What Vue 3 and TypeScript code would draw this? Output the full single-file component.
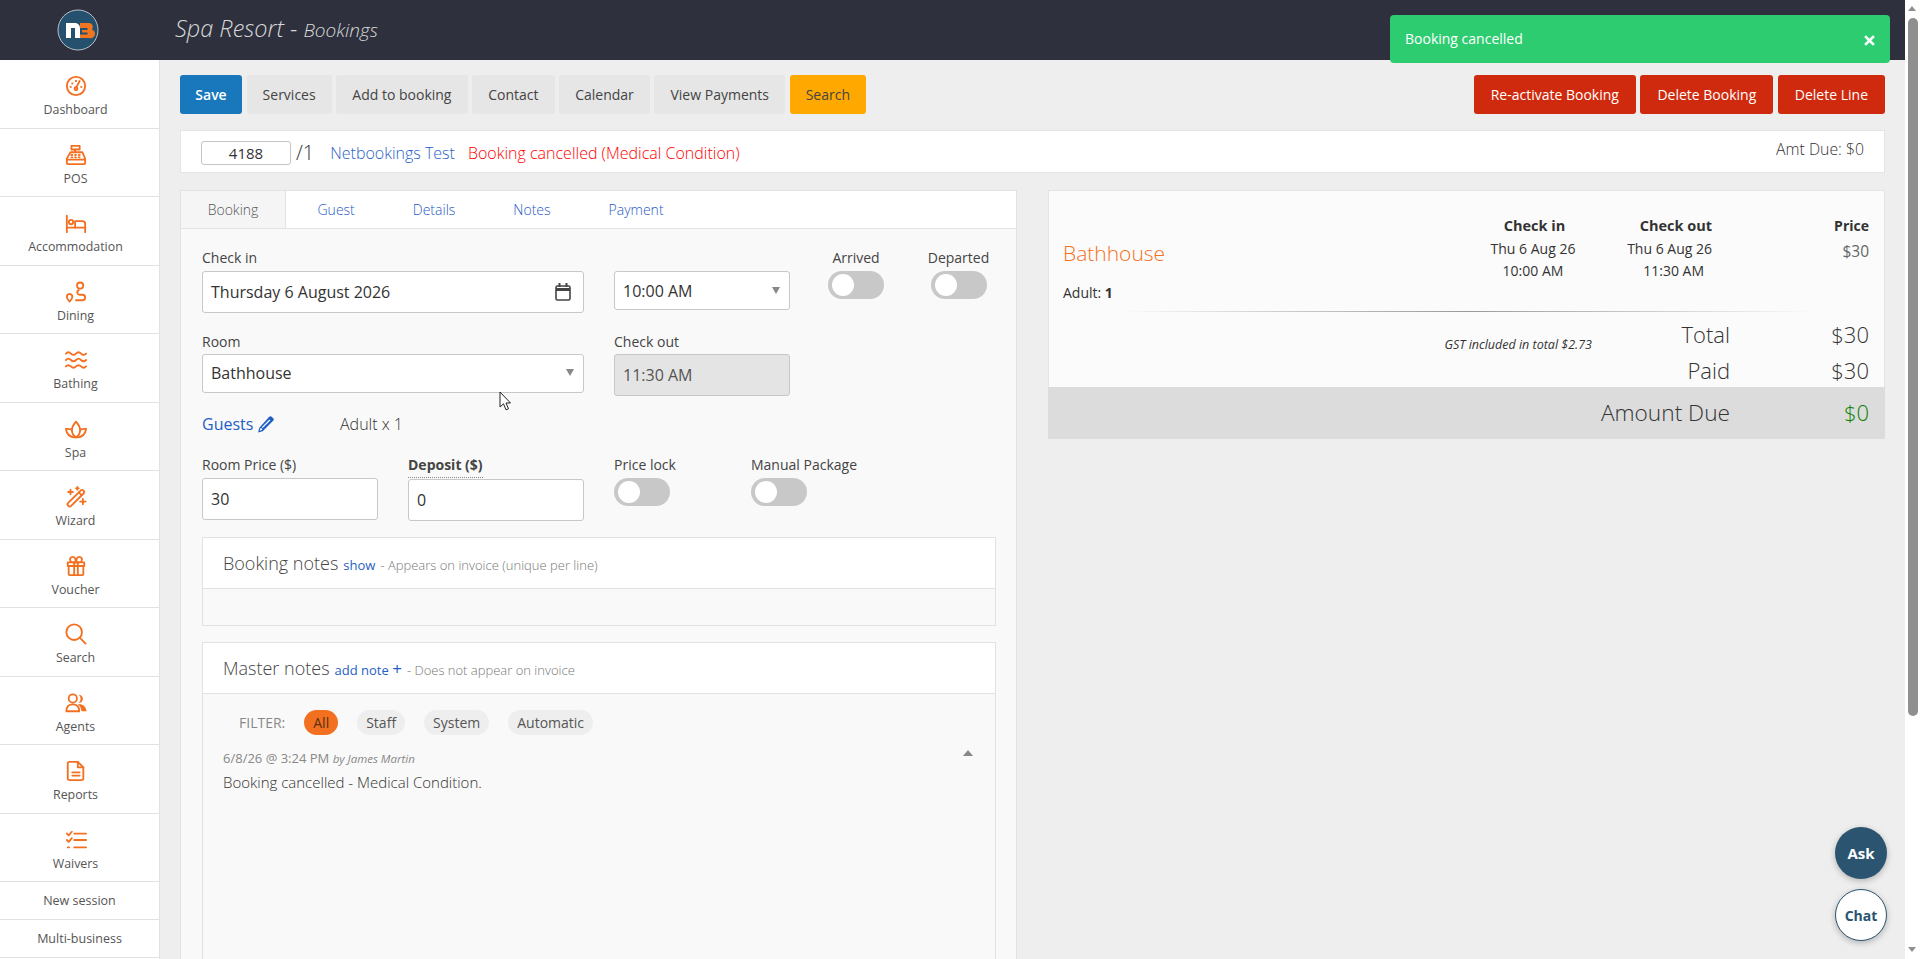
<script setup lang="ts">
interface NavItem {
  label: string
  paths: string[]
  filled?: string[]
  circles?: number[][]
}

const nav: NavItem[] = [
  {
    label: 'Dashboard',
    paths: ['M12 14l4-7.5'],
    filled: ['M7 8.2h2v2H7z', 'M11 5.5h2v2h-2z', 'M5.2 12h2v2h-2z', 'M16.8 12h2v2h-2z'],
    circles: [[12, 12, 10], [12, 15, 1.6]],
  },
  {
    label: 'POS',
    paths: ['M7 2h9v4H7z', 'M11 6v3', 'M6 9h13l3 7v5a1 1 0 0 1-1 1H3a1 1 0 0 1-1-1v-5z', 'M2 17h20', 'M7 12h1M11 12h1M15 12h1M7 14.5h1M11 14.5h1M15 14.5h1'],
  },
  {
    label: 'Accommodation',
    paths: ['M2 4v18', 'M2 17h20', 'M22 22v-9a3 3 0 0 0-3-3h-8v7'],
    circles: [[6.6, 11, 2.4]],
  },
  {
    label: 'Dining',
    paths: ['M5 14a3.4 3.4 0 0 0-3 3.5c0 2 3 5 3 5s3-3 3-5A3.4 3.4 0 0 0 5 14z', 'M12 21h7a3 3 0 0 0 0-6h-3a2.6 2.6 0 0 1-1-5'],
    circles: [[16.5, 5, 3.4]],
  },
  {
    label: 'Bathing',
    paths: [
      'M1 5c2-2 3.500-2 5.500 0s3.500 2 5.500 0 3.500-2 5.500 0 3.500 2 5.500 0',
      'M1 12c2-2 3.500-2 5.500 0s3.500 2 5.500 0 3.500-2 5.500 0 3.500 2 5.500 0',
      'M1 19c2-2 3.500-2 5.500 0s3.500 2 5.500 0 3.500-2 5.500 0 3.500 2 5.500 0',
    ],
  },
  {
    label: 'Spa',
    paths: [
      'M12 21c-3-2-4.500-5-4.500-8 0-3 2-6 4.500-9 2.500 3 4.500 6 4.500 9 0 3-1.500 6-4.500 8z',
      'M12 21c-6 .5-10-3-11-9 2.500-.5 4.500 0 6.500 1',
      'M12 21c6 .5 10-3 11-9-2.500-.5-4.500 0-6.500 1',
    ],
  },
  {
    label: 'Wizard',
    paths: [
      'M3.500 18.500L17 5a2.200 2.200 0 0 1 3.200 3.200L6.700 21.700a2.200 2.200 0 0 1-3.200-3.200z',
      'M15 7l3 3',
      'M6 4v5M3.500 6.500h5',
      'M13.500 1v3M12 2.500h3',
      'M19.500 14v6M16.500 17h6',
    ],
  },
  {
    label: 'Voucher',
    paths: [
      'M3 8h18v4H3z',
      'M4 12h16v9a1 1 0 0 1-1 1H5a1 1 0 0 1-1-1z',
      'M10 8v14M14 8v14',
      'M12 8H8.500a3 3 0 1 1 2.500-4.600z',
      'M12 8h3.500a3 3 0 1 0-2.500-4.600z',
    ],
  },
  {
    label: 'Search',
    paths: ['M16 16l6.500 6.500'],
    circles: [[10, 10, 8.500]],
  },
  {
    label: 'Agents',
    paths: ['M1.500 21c0-5 3-7.500 7-7.500s7 2.500 7 7.500z'],
    filled: ['M15 3a4.500 4.500 0 0 1 0 9 6 6 0 0 0 0-9z', 'M14 13.500c5-1 9 2 9.500 7.500H18c0-3-1.500-5.500-4-7.500z'],
    circles: [[8.500, 7, 4.500]],
  },
  {
    label: 'Reports',
    paths: ['M5 2h9l6 6v12a2 2 0 0 1-2 2H5a2 2 0 0 1-2-2V4a2 2 0 0 1 2-2z', 'M14 2v6h6', 'M8 13.500h8M8 17h8'],
  },
  {
    label: 'Waivers',
    paths: ['M2 5l2 2 3.500-4', 'M2 12l2 2 3.500-4', 'M3 20h1.500', 'M10 5h13M10 12h13M10 20h13'],
  },
]

const toolbar = ['Services', 'Add to booking', 'Contact', 'Calendar', 'View Payments']
const dangerButtons = ['Re-activate Booking', 'Delete Booking', 'Delete Line']
const tabs = ['Guest', 'Details', 'Notes', 'Payment']
const filters = ['Staff', 'System', 'Automatic']
</script>

<template>
  <div class="page">
    <div class="main">
      <header class="topbar">
        <div class="logo-cell">
          <svg class="logo" viewBox="0 0 42 42" width="42" height="42">
            <circle cx="21" cy="21" r="20" fill="#25506e" stroke="#b9c0c6" stroke-width="1" />
            <path d="M9 29V14h9a5 5 0 0 1 5 5v10h-5V19h-4v10z" fill="#fff" />
            <path d="M23 14h9a4 4 0 0 1 3 6.500 4.500 4.500 0 0 1-3 8.500h-9v-3.500h7.500v-2H25v-2.500h5.500v-2H23z" fill="#f07622" />
          </svg>
        </div>
        <div class="title">Spa Resort - <span class="title-sub">Bookings</span></div>
      </header>

      <div class="layout">
        <nav class="sidebar">
          <a v-for="item in nav" :key="item.label" class="nav-item">
            <svg viewBox="0 0 24 24" width="22" height="22" fill="none" stroke="#f37021" stroke-width="2" stroke-linecap="round" stroke-linejoin="round">
              <circle v-for="(c, i) in item.circles" :key="i" :cx="c[0]" :cy="c[1]" :r="c[2]" />
              <path v-for="(d, i) in item.paths" :key="i" :d="d" />
              <path v-for="(d, i) in item.filled" :key="i" :d="d" fill="#f37021" stroke="none" />
            </svg>
            <span>{{ item.label }}</span>
          </a>
          <a class="nav-text">New session</a>
          <a class="nav-text">Multi-business</a>
        </nav>

        <main class="content">
          <div class="toolbar">
            <div class="btn-group">
              <button class="btn btn-primary">Save</button>
              <button v-for="b in toolbar" :key="b" class="btn">{{ b }}</button>
              <button class="btn btn-amber">Search</button>
            </div>
            <div class="btn-group">
              <button v-for="b in dangerButtons" :key="b" class="btn btn-danger">{{ b }}</button>
            </div>
          </div>

          <div class="info-bar">
            <span class="ref-box">4188</span>
            <span class="ref-line">/1</span>
            <a class="guest-link">Netbookings Test</a>
            <span class="cancel-note">Booking cancelled (Medical Condition)</span>
            <span class="amt-due">Amt Due: $0</span>
          </div>

          <div class="columns">
            <section class="card">
              <div class="tabs">
                <span class="tab tab-active">Booking</span>
                <a v-for="t in tabs" :key="t" class="tab">{{ t }}</a>
              </div>

              <div class="form">
                <div class="row row-one">
                  <div class="field wide">
                    <label>Check in</label>
                    <div class="input tall">
                      Thursday 6 August 2026
                      <svg viewBox="0 0 16 18" width="16" height="18" fill="none" stroke="#444" stroke-width="1.600">
                        <rect x="1" y="3" width="14" height="14" rx="1.500" />
                        <path d="M1 6.500h14" stroke-width="3" />
                        <path d="M4.500 0v4M11.500 0v4" stroke-width="2" />
                      </svg>
                    </div>
                  </div>
                  <div class="field narrow">
                    <label>&nbsp;</label>
                    <div class="input">10:00 AM<i class="caret"></i></div>
                  </div>
                  <div class="switch-field arrived">
                    <label>Arrived</label>
                    <span class="switch"></span>
                  </div>
                  <div class="switch-field departed">
                    <label>Departed</label>
                    <span class="switch"></span>
                  </div>
                </div>

                <div class="row row-two">
                  <div class="field wide">
                    <label>Room</label>
                    <div class="input">Bathhouse<i class="caret"></i></div>
                  </div>
                  <div class="field narrow">
                    <label>Check out</label>
                    <div class="input tall disabled">11:30 AM</div>
                  </div>
                </div>

                <div class="guests-row">
                  <a class="guests-link">
                    Guests
                    <svg viewBox="0 0 16 16" width="17" height="17" fill="#1f5fc4">
                      <path d="M11.500.8a1.600 1.600 0 0 1 2.300 0l1.400 1.400a1.600 1.600 0 0 1 0 2.300L5.400 14.300 1 15.500l1.200-4.400zM3.300 11.300l-.7 2.500 2.100-.6.200-1.400z" />
                      <path d="M4.500 10.600l7.200-7.200.8.800-7.200 7.200z" fill="#fff" />
                    </svg>
                  </a>
                  <span class="guests-count">Adult x 1</span>
                </div>

                <div class="row row-price">
                  <div class="field half">
                    <label>Room Price ($)</label>
                    <div class="input tall">30</div>
                  </div>
                  <div class="field half deposit">
                    <label class="strong"><span>Deposit ($)</span></label>
                    <div class="input tall">0</div>
                  </div>
                  <div class="switch-field price-lock">
                    <label>Price lock</label>
                    <span class="switch"></span>
                  </div>
                  <div class="switch-field manual">
                    <label>Manual Package</label>
                    <span class="switch"></span>
                  </div>
                </div>

                <div class="panel booking-notes">
                  <div class="panel-head">
                    <span class="panel-title">Booking notes</span>
                    <a class="panel-link">show</a>
                    <span class="panel-hint">- Appears on invoice (unique per line)</span>
                  </div>
                  <div class="panel-empty"></div>
                </div>

                <div class="panel master-notes">
                  <div class="panel-head">
                    <span class="panel-title">Master notes</span>
                    <a class="panel-link">add note <b class="plus">+</b></a>
                    <span class="panel-hint">- Does not appear on invoice</span>
                  </div>
                  <div class="notes-body">
                    <div class="filter-row">
                      <span class="filter-label">FILTER:</span>
                      <span class="pill pill-on">All</span>
                      <span v-for="f in filters" :key="f" class="pill">{{ f }}</span>
                    </div>
                    <div class="note-meta">
                      <span>6/8/26 @ 3:24 PM <em>by James Martin</em></span>
                      <i class="caret-up"></i>
                    </div>
                    <p class="note-text">Booking cancelled - Medical Condition.</p>
                  </div>
                </div>
              </div>
            </section>

            <section class="summary">
              <div class="summary-line">
                <div class="room-col">
                  <div class="room-name">Bathhouse</div>
                  <div class="room-guests">Adult: <b>1</b></div>
                </div>
                <div class="date-col">
                  <b>Check in</b>
                  <span>Thu 6 Aug 26</span>
                  <span>10:00 AM</span>
                </div>
                <div class="date-col out">
                  <b>Check out</b>
                  <span>Thu 6 Aug 26</span>
                  <span class="out-time">11:30 AM</span>
                </div>
                <div class="price-col">
                  <b>Price</b>
                  <span>$30</span>
                </div>
              </div>
              <div class="fade-rule"></div>
              <div class="total-row">
                <span class="gst">GST included in total $2.73</span>
                <span>Total</span>
                <span>$30</span>
              </div>
              <div class="total-row paid">
                <span></span>
                <span>Paid</span>
                <span>$30</span>
              </div>
              <div class="total-row due">
                <span></span>
                <span>Amount Due</span>
                <span class="due-value">$0</span>
              </div>
            </section>
          </div>
        </main>
      </div>
    </div>

    <div class="scrollbar">
      <i class="arrow-up"></i>
      <div class="thumb"></div>
      <i class="arrow-down"></i>
    </div>

    <div class="toast">
      <span>Booking cancelled</span>
      <svg viewBox="0 0 10 10" width="11" height="11" stroke="#fff" stroke-width="2.400">
        <path d="M1 1l8 8M9 1l-8 8" />
      </svg>
    </div>

    <button class="fab fab-ask">Ask</button>
    <button class="fab fab-chat">Chat</button>

    <svg class="cursor" viewBox="0 0 13 20" width="13" height="20">
      <path d="M1 1v15l3.500-3.200 2.500 6 2.500-1-2.500-5.800H11.500z" fill="#fff" stroke="#222" stroke-width="1" stroke-linejoin="round" />
    </svg>
  </div>
</template>

<style>
html,
body {
  margin: 0;
  overflow: hidden;
}
</style>

<style scoped>
.page {
  position: relative;
  display: flex;
  height: 959px;
  overflow: hidden;
  font-family: "Open Sans", "Liberation Sans", sans-serif;
  font-size: 14px;
  color: #333;
  background: #eee;
}

.main {
  flex: 1;
  min-width: 0;
  display: flex;
  flex-direction: column;
}

.topbar {
  flex: none;
  height: 60px;
  display: flex;
  align-items: center;
  background: #2e303d;
}

.logo-cell {
  width: 175px;
  padding-left: 57px;
  box-sizing: border-box;
  display: flex;
}

.title {
  font-size: 23.500px;
  font-style: italic;
  font-weight: 300;
  color: #d8d8d8;
  margin-top: -5px;
}

.title-sub {
  font-size: 19px;
}

.layout {
  flex: 1;
  min-height: 0;
  display: flex;
}

.sidebar {
  flex: none;
  width: 160px;
  box-sizing: border-box;
  background: #fff;
  border-right: 1px solid #e2e2e2;
  overflow: hidden;
}

.nav-item {
  height: 68.500px;
  box-sizing: border-box;
  padding: 15px 8px 0 0;
  display: flex;
  flex-direction: column;
  align-items: center;
  gap: 3px;
  border-bottom: 1px solid #e4e1e4;
  font-size: 12.400px;
  line-height: 20px;
  color: #555;
}

.nav-text {
  display: block;
  height: 38px;
  box-sizing: border-box;
  border-bottom: 1px solid #e4e1e4;
  font-size: 12.500px;
  line-height: 37px;
  text-align: center;
  color: #555;
}

.content {
  flex: 1;
  min-width: 0;
  padding: 15px 20px 0;
}

.toolbar {
  display: flex;
  justify-content: space-between;
  margin-bottom: 16px;
}

.btn-group {
  display: flex;
  gap: 4.500px;
}

.btn {
  height: 39px;
  padding: 0 16.100px;
  border: 0;
  border-radius: 3px;
  background: #e6e6e6;
  color: #444;
  font: inherit;
  cursor: pointer;
}

.btn-primary {
  width: 62px;
  padding: 0;
  background: #1878bb;
  color: #fff;
  font-weight: 600;
}

.btn-amber {
  background: #ffa900;
}

.btn-danger {
  padding: 0 17px;
  background: #d02a0e;
  color: #fff;
}

.info-bar {
  height: 43px;
  box-sizing: border-box;
  display: flex;
  align-items: center;
  padding: 2px 20px 0;
  background: #fff;
  border: 1px solid #e4e4e4;
  margin-bottom: 17px;
  font-weight: 300;
}

.ref-box {
  width: 90px;
  height: 24px;
  box-sizing: border-box;
  border: 1px solid #c4c4c4;
  border-radius: 3px;
  text-align: center;
  line-height: 22px;
  font-size: 15px;
  font-weight: 400;
}

.ref-line {
  margin-left: 5px;
  font-size: 20px;
}

.guest-link {
  margin-left: 16px;
  font-size: 16px;
  color: #2a62c9;
}

.cancel-note {
  margin-left: 13px;
  font-size: 16px;
  color: #f00;
}

.amt-due {
  margin-left: auto;
  margin-top: -8px;
  margin-right: 0;
  font-size: 15.800px;
}

.columns {
  display: grid;
  grid-template-columns: 837px 837px;
  column-gap: 31px;
  align-items: start;
}

.card {
  height: 900px;
  background: #f9f9f9;
  border: 1px solid #e2e2e2;
  box-sizing: border-box;
}

.tabs {
  display: flex;
  height: 38px;
  box-sizing: border-box;
  background: #fff;
  border-bottom: 1px solid #e4e4e4;
}

.tab {
  padding: 0 29px;
  line-height: 37px;
  color: #1f5ac4;
  font-weight: 300;
}

.tab-active {
  width: 105px;
  padding: 0;
  margin-right: 2.500px;
  text-align: center;
  background: #f5f5f5;
  border-right: 1px solid #e4e4e4;
  color: #555;
  box-sizing: border-box;
}

.form {
  padding: 19px 20px 0 21px;
}

.row {
  display: flex;
}

.field {
  display: flex;
  flex-direction: column;
}

.field label,
.switch-field label {
  line-height: 20px;
  color: #444;
  white-space: nowrap;
}

.wide {
  width: 382px;
  margin-right: 30px;
}

.narrow {
  width: 176px;
}

.input {
  position: relative;
  height: 39px;
  box-sizing: border-box;
  margin-top: 3px;
  padding: 0 8px;
  display: flex;
  align-items: center;
  justify-content: space-between;
  background: #fff;
  border: 1px solid #c8c8c8;
  border-radius: 3px;
  font-size: 16px;
  color: #333;
}

.tall {
  height: 42px;
}

.input svg {
  margin-right: 4px;
}

.disabled {
  background: #e4e4e4;
  color: #555;
}

.caret {
  width: 0;
  height: 0;
  margin-right: 1px;
  border-left: 4px solid transparent;
  border-right: 4px solid transparent;
  border-top: 7px solid #888;
}

.switch-field {
  display: flex;
  flex-direction: column;
  align-items: center;
}

.switch {
  position: relative;
  display: block;
  width: 56px;
  height: 28px;
  margin-top: 3px;
  border-radius: 14px;
  background: #c8c8c8;
}

.switch::after {
  content: "";
  position: absolute;
  left: 4px;
  top: 3px;
  width: 22px;
  height: 22px;
  border-radius: 50%;
  background: #fff;
}

.arrived {
  width: 56px;
  margin-left: 38px;
}

.departed {
  width: 61px;
  margin-left: 44px;
}

.row-two {
  margin-top: 19px;
}

.row-two .input {
  margin-top: 2px;
}

.row-two .wide .input {
  padding-bottom: 2px;
}

.guests-row {
  display: flex;
  align-items: center;
  height: 22px;
  margin-top: 17px;
  font-size: 16px;
}

.guests-link {
  width: 138px;
  display: flex;
  align-items: center;
  gap: 4px;
  color: #1f5fc4;
}

.guests-count {
  color: #333;
  font-weight: 300;
}

.row-price {
  margin-top: 20px;
}

.half {
  width: 176px;
  margin-right: 30px;
}

.deposit .input {
  margin-top: 4px;
}

.strong {
  height: 20px;
}

.strong span {
  display: inline-block;
  height: 23px;
  box-sizing: border-box;
  font-weight: 700;
  border-bottom: 1px dotted #888;
}

.price-lock {
  width: 56px;
  align-items: flex-start;
}

.manual {
  width: 100px;
  align-items: flex-start;
  margin-left: 81px;
}

.panel {
  border: 1px solid #e2e2e2;
  background: #f9f9f9;
}

.booking-notes {
  margin-top: 16px;
}

.master-notes {
  margin-top: 16px;
}

.panel-head {
  height: 51px;
  box-sizing: border-box;
  padding: 0 20px;
  display: flex;
  align-items: baseline;
  line-height: 50px;
  gap: 5px;
  background: #fff;
  border-bottom: 1px solid #e2e2e2;
}

.panel-title {
  font-size: 18px;
  font-weight: 300;
  color: #444;
}

.panel-link {
  font-size: 13px;
  color: #1f5fc4;
}

.plus {
  font-size: 17px;
  font-weight: 400;
  line-height: 1;
}

.panel-hint {
  font-size: 13px;
  font-weight: 300;
  color: #777;
}

.panel-empty {
  height: 36px;
}

.notes-body {
  height: 300px;
  padding: 16px 20px 0;
}

.filter-row {
  display: flex;
  align-items: center;
  gap: 19px;
  padding-left: 16px;
}

.filter-label {
  color: #888;
}

.pill {
  height: 25px;
  padding: 0 9px;
  border-radius: 13px;
  background: #eee;
  line-height: 25px;
  color: #555;
}

.pill-on {
  background: #f37021;
  color: #5a3010;
}

.note-meta {
  display: flex;
  justify-content: space-between;
  margin-top: 13px;
  font-size: 13px;
  line-height: 20px;
  color: #888;
}

.note-meta em {
  font-size: 11.500px;
}

.caret-up {
  width: 0;
  height: 0;
  margin: 2px 2px 0 0;
  border-left: 5px solid transparent;
  border-right: 5px solid transparent;
  border-bottom: 6px solid #888;
}

.note-text {
  margin: 3px 0 0;
  line-height: 20px;
  font-size: 15px;
  font-weight: 300;
}

.summary {
  background: #fbfbfb;
  border: 1px solid #e4e4e4;
  box-sizing: border-box;
  height: 249px;
  display: flex;
  flex-direction: column;
}

.summary-line {
  display: flex;
  height: 120px;
  padding: 25px 15px 0 14px;
  box-sizing: border-box;
}

.room-col {
  flex: 1;
}

.room-name {
  margin-top: 23px;
  font-size: 21px;
  line-height: 28px;
  font-weight: 300;
  color: #f37021;
}

.room-guests {
  margin-top: 16px;
  line-height: 20px;
  font-size: 14px;
}

.date-col {
  width: 90px;
  display: flex;
  flex-direction: column;
  align-items: center;
  font-size: 14px;
  line-height: 22px;
}

.date-col b {
  line-height: 20px;
  margin-bottom: 2px;
  padding-left: 3px;
  font-size: 14.500px;
  font-weight: 700;
}

.date-col span {
  font-size: 14px;
}

.out {
  margin-left: 44px;
  align-items: flex-end;
}

.out-time {
  margin-right: 8px;
}

.price-col {
  width: 157px;
  display: flex;
  flex-direction: column;
  align-items: flex-end;
}

.price-col b {
  line-height: 20px;
  margin-bottom: 4px;
}

.price-col span {
  color: #666;
  font-size: 15.500px;
  line-height: 22px;
}

.fade-rule {
  height: 1px;
  margin: 0 70px;
  background: linear-gradient(to right, rgba(120, 120, 120, 0), #999 50%, rgba(120, 120, 120, 0));
}

.total-row {
  display: grid;
  grid-template-columns: 1fr 138px 139px;
  padding: 0 15px;
  align-items: center;
  height: 36px;
  margin-top: 2px;
  text-align: right;
  font-size: 22px;
  font-weight: 300;
  color: #333;
}

.gst {
  font-size: 12.500px;
  font-style: italic;
  font-weight: 400;
  padding-top: 22px;
}

.paid {
  margin-top: 2px;
}

.due {
  flex: 1;
  margin: -1px -1px -1px;
  padding: 0 16px 2px;
  background: #dcdcdc;
  font-size: 22.700px;
}

.due-value {
  font-size: 22px;
  color: #0a8000;
}

.scrollbar {
  position: relative;
  flex: none;
  width: 15px;
  background: #fff;
}

.thumb {
  position: absolute;
  left: 3px;
  top: 18px;
  width: 10px;
  height: 698px;
  border-radius: 5px;
  background: #8f8f8f;
}

.arrow-up,
.arrow-down {
  position: absolute;
  left: 3px;
  width: 0;
  height: 0;
  border-left: 4.500px solid transparent;
  border-right: 4.500px solid transparent;
}

.arrow-up {
  top: 6px;
  border-bottom: 5px solid #8f8f8f;
}

.arrow-down {
  bottom: 7px;
  border-top: 5px solid #8f8f8f;
}

.toast {
  position: absolute;
  left: 1390px;
  top: 15px;
  width: 500px;
  height: 48px;
  box-sizing: border-box;
  padding: 0 15px 0 15px;
  display: flex;
  align-items: center;
  justify-content: space-between;
  background: #2ecc71;
  border-radius: 4px;
  color: #fff;
}

.toast span {
  margin-top: -2px;
}

.toast svg {
  margin-top: 2px;
}

.fab {
  position: absolute;
  left: 1835px;
  width: 52px;
  height: 52px;
  border-radius: 50%;
  font: inherit;
  font-weight: 700;
  box-shadow: 0 2px 6px rgba(0, 0, 0, 0.25);
  cursor: pointer;
  padding: 0;
}

.fab-ask {
  top: 827px;
  border: 0;
  background: #2a5470;
  color: #fff;
  font-size: 15px;
}

.fab-chat {
  top: 889px;
  border: 1px solid #2a5470;
  background: #fff;
  color: #2a5470;
}

.cursor {
  position: absolute;
  left: 499px;
  top: 391px;
}
</style>
